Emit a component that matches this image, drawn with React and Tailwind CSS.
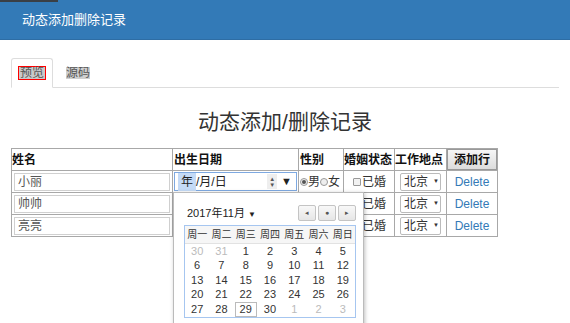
import React from "react";

const FONT = { fontFamily: '"Liberation Sans", "Noto Sans CJK SC", sans-serif' };

const rows = ["小丽", "帅帅", "亮亮"];
const weekdays = ["周一", "周二", "周三", "周四", "周五", "周六", "周日"];
const weeks = [
  [["30", 1], ["31", 1], ["1"], ["2"], ["3"], ["4"], ["5"]],
  [["6"], ["7"], ["8"], ["9"], ["10"], ["11"], ["12"]],
  [["13"], ["14"], ["15"], ["16"], ["17"], ["18"], ["19"]],
  [["20"], ["21"], ["22"], ["23"], ["24"], ["25"], ["26"]],
  [["27"], ["28"], ["29", 0, 1], ["30"], ["1", 1], ["2", 1], ["3", 1]],
];

const DateInput = () => (
  <div className="flex items-center h-[19px] pl-[3px] pr-[4px] border border-[#7ea9e1] text-[12px] text-[#222] bg-white">
    <span className="bg-[#c4daf6] px-[3px]">年</span>
    <span>/月/日</span>
    <span className="ml-auto flex items-center gap-[4px]">
      <span className="flex flex-col items-center justify-center w-[10px] h-[15px] bg-[#eee] text-[#555] leading-none">
        <span className="text-[6px]">▲</span>
        <span className="text-[6px]">▼</span>
      </span>
      <span className="text-[11px] text-[#222]">▼</span>
    </span>
  </div>
);

const Radio = ({ checked }) => (
  <span className="inline-flex items-center justify-center w-[8px] h-[8px] rounded-full border border-[#999] bg-[#eee]">
    {checked && <span className="w-[4px] h-[4px] rounded-full bg-[#555]" />}
  </span>
);

// open date picker popup under the first row's date field
const Calendar = () => (
  <div className="absolute left-[0px] top-[21px] z-10 w-[191px] h-[140px] bg-white border border-[#bbb] shadow-[1px_1px_4px_rgba(0,0,0,0.25)]">
    <div className="flex items-center justify-between pl-[13px] pr-[7px] pt-[8px] h-[32px]">
      <span className="text-[11px] text-[#222]">
        2017年11月 <span className="text-[8px]">▼</span>
      </span>
      <div className="flex gap-[2px]">
        {["◂", "●", "▸"].map((g) => (
          <span
            key={g}
            className="flex items-center justify-center w-[18px] h-[16px] border border-[#c4c4c4] rounded-[2px] bg-gradient-to-b from-[#f8f8f8] to-[#e6e6e6] text-[#555] text-[7px]"
          >
            {g}
          </span>
        ))}
      </div>
    </div>
    <div className="ml-[10px] w-[172px] border border-[#a6c6f0]">
      <div className="grid grid-cols-7 h-[18px] bg-[#f6f6f6] border-b border-[#e2e2e2] items-center text-center text-[10px] text-[#333]">
        {weekdays.map((d) => (
          <span key={d}>{d}</span>
        ))}
      </div>
      {weeks.map((w, i) => (
        <div key={i} className="grid grid-cols-7 h-[14.5px] items-center text-center text-[11px]">
          {w.map(([n, other, today], j) => (
            <span
              key={j}
              className={
                "leading-[13px] " +
                (other ? "text-[#bbb] " : "text-[#333] ") +
                (today ? "border border-[#bbb] mx-[1px]" : "")
              }
            >
              {n}
            </span>
          ))}
        </div>
      ))}
    </div>
  </div>
);

export default function App() {
  return (
    <div className="w-[570px] h-[323px] overflow-hidden bg-white text-[#333]" style={FONT}>
      {/* top bar */}
      <div className="flex flex-col h-[40px] bg-[#337ab7] border-b border-[#2e6da4]">
        <div className="h-[2px] w-[58px] bg-[#3a3f45]" />
        <div className="flex-1 flex items-center pl-[22px] pb-[2px] text-[13px] text-white">
          动态添加删除记录
        </div>
      </div>

      {/* tabs */}
      <div className="px-[11px] pt-[19px]">
        <div className="flex items-end h-[29px] border-b border-[#ddd]">
          <div className="flex items-center justify-center w-[42px] h-[30px] -mb-px border border-[#ddd] border-b-white rounded-t-[3px] bg-white">
            <span className="border border-[#f00] bg-[#c9c9c9] text-[#555] text-[12px] leading-[12px] px-[1px]">
              预览
            </span>
          </div>
          <div className="flex items-center h-[29px] pl-[13px]">
            <span className="bg-[#cfcfcf] text-[#555] text-[12px] leading-[12px]">源码</span>
          </div>
        </div>
      </div>

      <h2 className="mt-[19px] text-center text-[21px] leading-[30px] text-[#333]">
        动态添加/删除记录
      </h2>

      {/* table */}
      <div className="pl-[11px] mt-[11px]">
        <table className="table-fixed border-collapse border border-[#888] text-[12px] w-[486px]">
          <colgroup>
            <col className="w-[161px]" />
            <col className="w-[126px]" />
            <col className="w-[45px]" />
            <col className="w-[51px]" />
            <col className="w-[52px]" />
            <col className="w-[51px]" />
          </colgroup>
          <thead>
            <tr className="h-[22px] font-bold text-[#111] text-left">
              <th className="border border-[#a8a8a8] px-0 font-bold">姓名</th>
              <th className="border border-[#a8a8a8] px-[1px] font-bold">出生日期</th>
              <th className="border border-[#a8a8a8] px-[1px] font-bold">性别</th>
              <th className="border border-[#a8a8a8] px-0 font-bold">婚姻状态</th>
              <th className="border border-[#a8a8a8] px-0 font-bold">工作地点</th>
              <th className="border border-[#a8a8a8] p-0">
                <div className="flex items-center justify-center h-[21px] border border-[#999] bg-gradient-to-b from-[#f6f6f6] to-[#dcdcdc] font-bold">
                  添加行
                </div>
              </th>
            </tr>
          </thead>
          <tbody>
            {rows.map((name, i) => (
              <tr key={name} className="h-[22px]">
                <td className="border border-[#a8a8a8] px-[2px] py-[1px]">
                  <div className="h-[18px] border border-[#d0d0d0] pl-[3px] flex items-center text-[#555]">
                    {name}
                  </div>
                </td>
                <td className="relative border border-[#a8a8a8] p-[1px]">
                  {i === 0 && <DateInput />}
                  {i === 0 && <Calendar />}
                </td>
                <td className="border border-[#a8a8a8] px-[1px]">
                  <span className="flex items-center text-[#333]">
                    <Radio checked />男<Radio />女
                  </span>
                </td>
                <td className="border border-[#a8a8a8] pl-[9px]">
                  <span className="flex items-center gap-[1px]">
                    <span className="w-[8px] h-[8px] border border-[#999] bg-[#f2f2f2] rounded-[1px]" />
                    已婚
                  </span>
                </td>
                <td className="border border-[#a8a8a8] pl-[5px]">
                  <div className="flex items-center w-[41px] h-[18px] border border-[#bbb] rounded-[2px] bg-white pl-[3px] text-[#333]">
                    北京<span className="ml-[5px] text-[6px]">▼</span>
                  </div>
                </td>
                <td className="border border-[#a8a8a8] text-center">
                  <span className="text-[#337ab7]">Delete</span>
                </td>
              </tr>
            ))}
          </tbody>
        </table>
      </div>
    </div>
  );
}
